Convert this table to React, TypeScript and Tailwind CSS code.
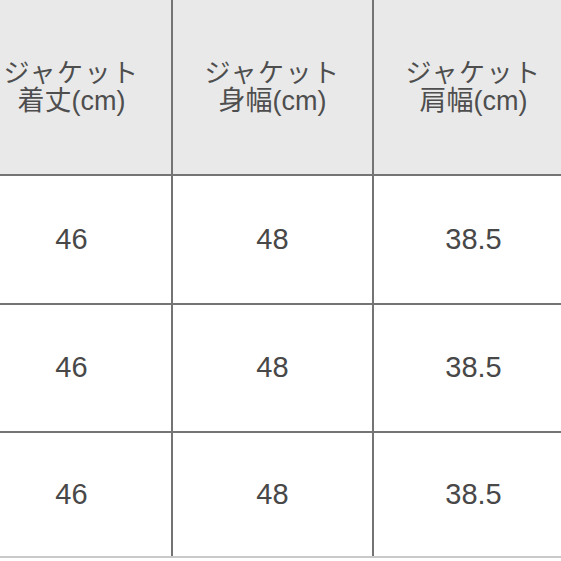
const headers = [
  ['ジャケット', '着丈(cm)'],
  ['ジャケット', '身幅(cm)'],
  ['ジャケット', '肩幅(cm)'],
]

const rows = [
  ['46', '48', '38.5'],
  ['46', '48', '38.5'],
  ['46', '48', '38.5'],
]

const rowHeights = ['h-[127px]', 'h-[126px]', 'h-[123px]']

export default function App() {
  return (
    <div
      className="w-[561px] h-[561px] overflow-hidden bg-white"
      style={{ fontFamily: '"Liberation Sans", "Noto Sans CJK JP", sans-serif' }}
    >
      <div className="ml-[-28px] w-[601px]">
        <div className="grid grid-cols-[199px_199px_199px] gap-[2px] bg-[#747474]">
          {headers.map((h, i) => (
            <div
              key={i}
              className="h-[174px] bg-[#e9e9e9] flex flex-col items-center justify-center text-[26px] leading-[28px] text-[#4e4e4e]"
            >
              <span className="tracking-[1.5px]">{h[0]}</span>
              <span className="text-[27px]">{h[1]}</span>
            </div>
          ))}
          {rows.map((r, ri) =>
            r.map((v, ci) => (
              <div
                key={ri + '-' + ci}
                className={`${rowHeights[ri]} bg-white flex items-center justify-center text-[29px] text-[#484848]`}
              >
                {v}
              </div>
            ))
          )}
        </div>
        <div className="h-[2px] bg-[#c9c9c9]" />
      </div>
    </div>
  )
}
